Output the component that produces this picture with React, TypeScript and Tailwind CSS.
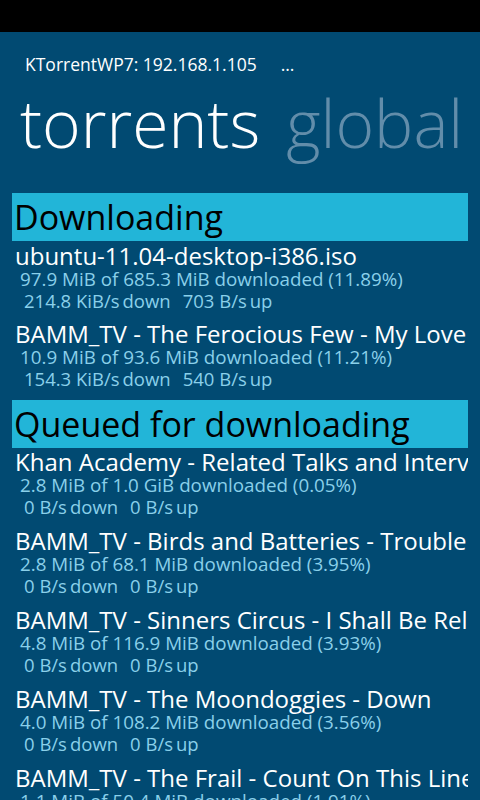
import React from "react";

type Item = { name: string; progress: string; down: string; up: string };

const downloading: Item[] = [
  { name: "ubuntu-11.04-desktop-i386.iso", progress: "97.9 MiB of 685.3 MiB downloaded (11.89%)", down: "214.8 KiB/s", up: "703 B/s" },
  { name: "BAMM_TV - The Ferocious Few - My Love Is Gone", progress: "10.9 MiB of 93.6 MiB downloaded (11.21%)", down: "154.3 KiB/s", up: "540 B/s" },
];

const queued: Item[] = [
  { name: "Khan Academy - Related Talks and Interviews", progress: "2.8 MiB of 1.0 GiB downloaded (0.05%)", down: "0 B/s", up: "0 B/s" },
  { name: "BAMM_TV - Birds and Batteries - Trouble", progress: "2.8 MiB of 68.1 MiB downloaded (3.95%)", down: "0 B/s", up: "0 B/s" },
  { name: "BAMM_TV - Sinners Circus - I Shall Be Released", progress: "4.8 MiB of 116.9 MiB downloaded (3.93%)", down: "0 B/s", up: "0 B/s" },
  { name: "BAMM_TV - The Moondoggies - Down", progress: "4.0 MiB of 108.2 MiB downloaded (3.56%)", down: "0 B/s", up: "0 B/s" },
  { name: "BAMM_TV - The Frail - Count On This Line", progress: "1.1 MiB of 50.4 MiB downloaded (1.91%)", down: "0 B/s", up: "0 B/s" },
];

function Row({ item, h }: { item: Item; h: string }) {
  return (
    <div className={`${h} flex flex-col`}>
      <div className="h-[24px] leading-[24px] text-[24px] text-white pl-[3px] whitespace-nowrap">{item.name}</div>
      <div className="h-[22px] leading-[22px] text-[18.8px] text-[#8AD0EA] pl-[8px] whitespace-nowrap">{item.progress}</div>
      <div className="h-[22px] leading-[22px] text-[18.5px] text-[#8AD0EA] pl-[12px] whitespace-nowrap">
        <span>{item.down}</span>
        <span className="ml-[3px]">down</span>
        <span className="ml-[12px]">{item.up}</span>
        <span className="ml-[3px]">up</span>
      </div>
    </div>
  );
}

function Header({ text }: { text: string }) {
  return (
    <div className="h-[48px] bg-[#22B5D8] text-black text-[34px] leading-[48px] pl-[2px] whitespace-nowrap">{text}</div>
  );
}

export default function App() {
  return (
    <div className="w-[480px] h-[800px] bg-[#014A72] overflow-hidden" style={{ fontFamily: '"Open Sans", "Noto Sans", sans-serif' }}>
      <div className="h-[32px] bg-black" />
      <div className="h-[46px] flex items-end pl-[25px] text-white text-[17.5px] leading-[28px] whitespace-nowrap">
        <span>KTorrentWP7: 192.168.1.105</span>
        <span className="ml-[24px]">...</span>
      </div>
      <div className="h-[94px] pt-[4px] flex items-start pl-[20px] text-[66px] leading-[80px] font-light whitespace-nowrap">
        <span className="text-white">torrents</span>
        <span className="ml-[26px] text-[#628DAA]">global</span>
      </div>
      <div className="mx-[12px] pt-[21px] overflow-hidden">
        <Header text="Downloading" />
        <div className="h-[3px]" />
        {downloading.map((it, i) => (
          <Row key={i} item={it} h="h-[78px]" />
        ))}
        <Header text="Queued for downloading" />
        <div className="h-[2px]" />
        {queued.map((it, i) => (
          <Row key={i} item={it} h="h-[79px]" />
        ))}
      </div>
    </div>
  );
}
